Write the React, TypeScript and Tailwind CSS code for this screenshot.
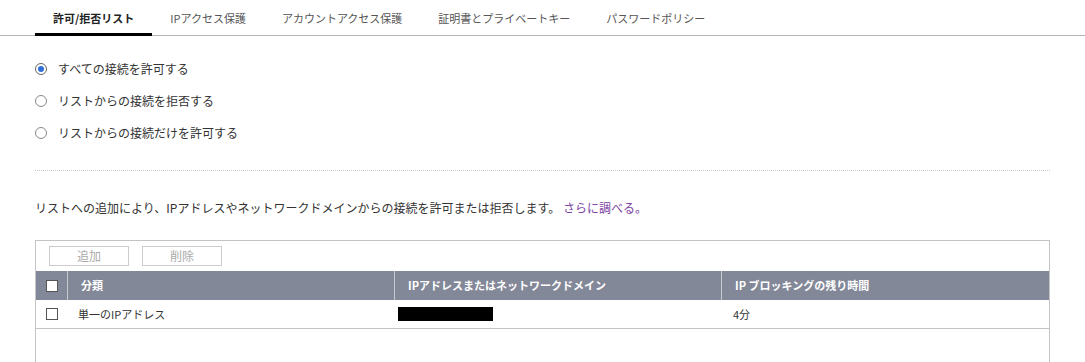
import { useState } from "react";

const tabs = ["許可/拒否リスト", "IPアクセス保護", "アカウントアクセス保護", "証明書とプライベートキー", "パスワードポリシー"];

const radios = ["すべての接続を許可する", "リストからの接続を拒否する", "リストからの接続だけを許可する"];

export default function App() {
  const [mode, setMode] = useState(0);

  return (
    <div className="w-[1085px] h-[362px] overflow-hidden bg-white text-[#333] font-['Noto_Sans_CJK_JP','Noto_Sans',sans-serif]">
      {/* tabs */}
      <div className="flex h-[36px] border-b border-[#b5b5b5] pl-[35px]">
        {tabs.map((t, i) => (
          <div
            key={i}
            className={`-mb-px flex items-center px-[18px] text-[11px] ${i === 0 ? "border-b-[3px] border-black pt-[3px] font-bold text-[#222]" : "text-[#555]"}`}
          >
            {t}
          </div>
        ))}
      </div>

      <div className="pl-[35px] w-[1050px]">
        {/* radios */}
        <div className="flex flex-col gap-[13px] pt-[23px]">
          {radios.map((r, i) => (
            <label key={i} className="flex items-center gap-[11px] h-[19px] text-[12px] text-[#333] cursor-pointer" onClick={() => setMode(i)}>
              <span className={`w-[12px] h-[12px] rounded-full border flex items-center justify-center ${mode === i ? "border-[#666]" : "border-[#888]"}`}>
                {mode === i && <span className="w-[6px] h-[6px] rounded-full bg-[#2f6fd8]" />}
              </span>
              {r}
            </label>
          ))}
        </div>

        <div className="mt-[28px] border-t border-dotted border-[#c8c8c8]" />

        <p className="mt-[28px] text-[12px] text-[#333] leading-[18px]">
          リストへの追加により、IPアドレスやネットワークドメインからの接続を許可または拒否します。 <span className="text-[#7b3fa0]">さらに調べる。</span>
        </p>

        {/* table */}
        <div className="mt-[23px] border border-[#c4c4c4] h-[140px]">
          <div className="flex gap-[13px] pl-[13px] pt-[5px] pb-[5px]">
            <button className="w-[80px] h-[20px] border border-[#ccc] text-[12px] text-[#aaa]">追加</button>
            <button className="w-[80px] h-[20px] border border-[#ccc] text-[12px] text-[#aaa]">削除</button>
          </div>
          <div className="flex h-[29px] bg-[#838899] text-white text-[11px] font-bold items-center">
            <div className="w-[31px] flex justify-center pl-px">
              <span className="w-[12px] h-[12px] bg-white border border-[#555]" />
            </div>
            <div className="w-px h-full bg-[#c8cad2]" />
            <div className="w-[326px] pl-[13px]">分類</div>
            <div className="w-px h-full bg-[#c8cad2]" />
            <div className="w-[326px] pl-[13px]">IPアドレスまたはネットワークドメイン</div>
            <div className="w-px h-full bg-[#c8cad2]" />
            <div className="flex-1 pl-[13px]">IP ブロッキングの残り時間</div>
          </div>
          <div className="flex h-[29px] items-center border-b border-[#c4c4c4] text-[11px] text-[#333]">
            <div className="w-[31px] flex justify-center pl-px">
              <span className="w-[12px] h-[12px] bg-white border border-[#555]" />
            </div>
            <div className="w-[327px] pl-[11px]">単一のIPアドレス</div>
            <div className="w-[327px] pl-[4px]">
              <div className="w-[95px] h-[14px] bg-black" />
            </div>
            <div className="flex-1 pl-[12px]">4分</div>
          </div>
        </div>
      </div>
    </div>
  );
}
